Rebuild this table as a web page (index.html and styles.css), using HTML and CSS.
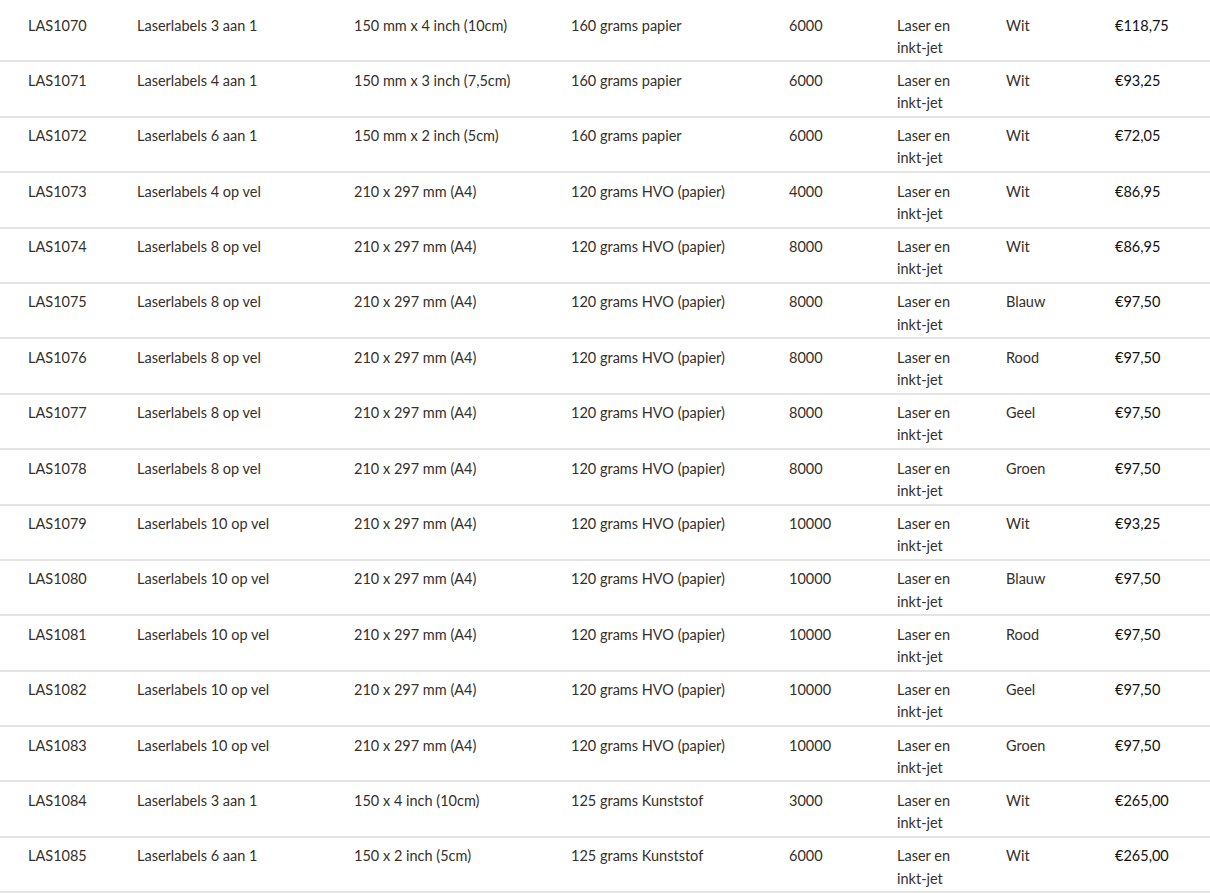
FILE: index.html
```html
<!DOCTYPE html>
<html lang="nl">
<head>
    <meta charset="UTF-8">
    <meta name="viewport" content="width=device-width, initial-scale=1.0">
    <title>Laserlabels</title>
    <link rel="stylesheet" href="styles.css">
</head>
<body>

    <table class="products">
        <colgroup>
            <col class="c-code">
            <col class="c-name">
            <col class="c-size">
            <col class="c-material">
            <col class="c-qty">
            <col class="c-print">
            <col class="c-color">
            <col class="c-price">
        </colgroup>
        <tbody>
            <tr><td>LAS1070</td><td>Laserlabels 3 aan 1</td><td>150 mm x 4 inch (10cm)</td><td>160 grams papier</td><td>6000</td><td>Laser en inkt-jet</td><td>Wit</td><td class="price">€118,75</td></tr>
            <tr><td>LAS1071</td><td>Laserlabels 4 aan 1</td><td>150 mm x 3 inch (7,5cm)</td><td>160 grams papier</td><td>6000</td><td>Laser en inkt-jet</td><td>Wit</td><td class="price">€93,25</td></tr>
            <tr><td>LAS1072</td><td>Laserlabels 6 aan 1</td><td>150 mm x 2 inch (5cm)</td><td>160 grams papier</td><td>6000</td><td>Laser en inkt-jet</td><td>Wit</td><td class="price">€72,05</td></tr>
            <tr><td>LAS1073</td><td>Laserlabels 4 op vel</td><td>210 x 297 mm (A4)</td><td>120 grams HVO (papier)</td><td>4000</td><td>Laser en inkt-jet</td><td>Wit</td><td class="price">€86,95</td></tr>
            <tr><td>LAS1074</td><td>Laserlabels 8 op vel</td><td>210 x 297 mm (A4)</td><td>120 grams HVO (papier)</td><td>8000</td><td>Laser en inkt-jet</td><td>Wit</td><td class="price">€86,95</td></tr>
            <tr><td>LAS1075</td><td>Laserlabels 8 op vel</td><td>210 x 297 mm (A4)</td><td>120 grams HVO (papier)</td><td>8000</td><td>Laser en inkt-jet</td><td>Blauw</td><td class="price">€97,50</td></tr>
            <tr><td>LAS1076</td><td>Laserlabels 8 op vel</td><td>210 x 297 mm (A4)</td><td>120 grams HVO (papier)</td><td>8000</td><td>Laser en inkt-jet</td><td>Rood</td><td class="price">€97,50</td></tr>
            <tr><td>LAS1077</td><td>Laserlabels 8 op vel</td><td>210 x 297 mm (A4)</td><td>120 grams HVO (papier)</td><td>8000</td><td>Laser en inkt-jet</td><td>Geel</td><td class="price">€97,50</td></tr>
            <tr><td>LAS1078</td><td>Laserlabels 8 op vel</td><td>210 x 297 mm (A4)</td><td>120 grams HVO (papier)</td><td>8000</td><td>Laser en inkt-jet</td><td>Groen</td><td class="price">€97,50</td></tr>
            <tr><td>LAS1079</td><td>Laserlabels 10 op vel</td><td>210 x 297 mm (A4)</td><td>120 grams HVO (papier)</td><td>10000</td><td>Laser en inkt-jet</td><td>Wit</td><td class="price">€93,25</td></tr>
            <tr><td>LAS1080</td><td>Laserlabels 10 op vel</td><td>210 x 297 mm (A4)</td><td>120 grams HVO (papier)</td><td>10000</td><td>Laser en inkt-jet</td><td>Blauw</td><td class="price">€97,50</td></tr>
            <tr><td>LAS1081</td><td>Laserlabels 10 op vel</td><td>210 x 297 mm (A4)</td><td>120 grams HVO (papier)</td><td>10000</td><td>Laser en inkt-jet</td><td>Rood</td><td class="price">€97,50</td></tr>
            <tr><td>LAS1082</td><td>Laserlabels 10 op vel</td><td>210 x 297 mm (A4)</td><td>120 grams HVO (papier)</td><td>10000</td><td>Laser en inkt-jet</td><td>Geel</td><td class="price">€97,50</td></tr>
            <tr><td>LAS1083</td><td>Laserlabels 10 op vel</td><td>210 x 297 mm (A4)</td><td>120 grams HVO (papier)</td><td>10000</td><td>Laser en inkt-jet</td><td>Groen</td><td class="price">€97,50</td></tr>
            <tr><td>LAS1084</td><td>Laserlabels 3 aan 1</td><td>150 x 4 inch (10cm)</td><td>125 grams Kunststof</td><td>3000</td><td>Laser en inkt-jet</td><td>Wit</td><td class="price">€265,00</td></tr>
            <tr><td>LAS1085</td><td>Laserlabels 6 aan 1</td><td>150 x 2 inch (5cm)</td><td>125 grams Kunststof</td><td>6000</td><td>Laser en inkt-jet</td><td>Wit</td><td class="price">€265,00</td></tr>
        </tbody>
    </table>

</body>
</html>
```

FILE: styles.css
```css
body {
    font-family: Lato, "Open Sans", sans-serif;
    font-size: 14.5px;
    color: #35302b;
    background-color: #fff;
    margin: 0;
    padding: 7px 0 0;
}
.products {
    width: 1210px;
    border-collapse: collapse;
    table-layout: fixed;
}
.c-code { width: 109px; }
.c-name { width: 217px; }
.c-size { width: 217px; }
.c-material { width: 218px; }
.c-qty { width: 108px; }
.c-print { width: 109px; }
.c-color { width: 109px; }
.c-price { width: 123px; }
.products td {
    vertical-align: top;
    line-height: 22.2px;
    padding: 7.5px 0 0 28px;
    height: 45.9px;
    border-bottom: 2px solid #e4e4e4;
}
.products td.price {
    color: #111;
}
```
